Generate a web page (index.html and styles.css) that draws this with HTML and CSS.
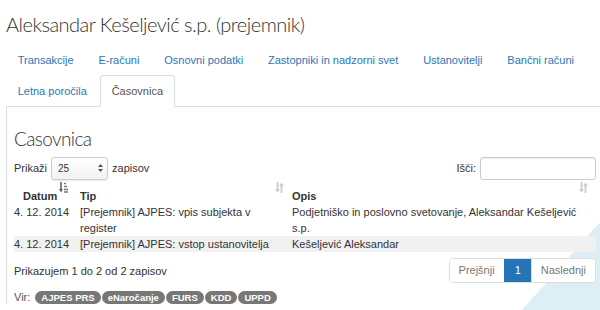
FILE: index.html
```html
<!DOCTYPE html>
<html lang="sl">
<head>
    <meta charset="UTF-8">
    <meta name="viewport" content="width=device-width, initial-scale=1.0">
    <title>Aleksandar Kešeljević s.p. (prejemnik)</title>
    <link rel="stylesheet" href="styles.css">
</head>
<body>
    <div class="page">
        <h1 class="title">Aleksandar Kešeljević s.p. (prejemnik)</h1>
        <ul class="tabs">
            <li><a href="#">Transakcije</a></li>
            <li><a href="#">E-računi</a></li>
            <li><a href="#">Osnovni podatki</a></li>
            <li><a href="#">Zastopniki in nadzorni svet</a></li>
            <li><a href="#">Ustanovitelji</a></li>
            <li><a href="#">Bančni računi</a></li>
            <li><a href="#">Letna poročila</a></li>
            <li class="active"><a href="#">Časovnica</a></li>
        </ul>
        <div class="tab-pane">
            <h2>Casovnica</h2>
            <div class="dt-top">
                <label class="length">Prikaži
                    <span class="select">
                        <span>25</span>
                        <svg width="5" height="8" viewBox="0 0 5 8"><path d="M0 3 L2.5 0 L5 3 Z M0 5 L2.5 8 L5 5 Z" fill="#555"/></svg>
                    </span>
                    zapisov</label>
                <label class="filter">Išči: <input type="search"></label>
            </div>
            <table class="timeline">
                <colgroup>
                    <col class="c-date">
                    <col class="c-type">
                    <col>
                </colgroup>
                <thead>
                    <tr>
                        <th class="th-date"><div class="th-in"><span>Datum</span>
                            <svg class="sort" width="9" height="11" viewBox="0 0 9 11"><path d="M2 0 V8" stroke="#666" stroke-width="1.6"/><path d="M0 7 H4 L2 10.5 Z" fill="#666"/><path d="M5 1.5 H7 M5 4.5 H8 M5 7.5 H9 M5 10 H9" stroke="#777" stroke-width="1.3"/></svg></div></th>
                        <th><div class="th-in"><span>Tip</span>
                            <svg class="sort" width="9" height="11" viewBox="0 0 9 11"><path d="M2.5 0 V8" stroke="#ccc" stroke-width="1.8"/><path d="M0 7 H5 L2.5 10.5 Z" fill="#ccc"/><path d="M6.5 3 V11" stroke="#ccc" stroke-width="1.8"/><path d="M4 4 H9 L6.5 0.5 Z" fill="#ccc"/></svg></div></th>
                        <th><div class="th-in"><span>Opis</span>
                            <svg class="sort" width="9" height="11" viewBox="0 0 9 11"><path d="M2.5 0 V8" stroke="#ccc" stroke-width="1.8"/><path d="M0 7 H5 L2.5 10.5 Z" fill="#ccc"/><path d="M6.5 3 V11" stroke="#ccc" stroke-width="1.8"/><path d="M4 4 H9 L6.5 0.5 Z" fill="#ccc"/></svg></div></th>
                    </tr>
                </thead>
                <tbody>
                    <tr>
                        <td>4. 12. 2014</td>
                        <td>[Prejemnik] AJPES: vpis subjekta v register</td>
                        <td>Podjetniško in poslovno svetovanje, Aleksandar Kešeljević s.p.</td>
                    </tr>
                    <tr class="even">
                        <td>4. 12. 2014</td>
                        <td>[Prejemnik] AJPES: vstop ustanovitelja</td>
                        <td>Kešeljević Aleksandar</td>
                    </tr>
                </tbody>
            </table>
            <div class="dt-bottom">
                <div class="info">Prikazujem 1 do 2 od 2 zapisov</div>
                <div class="pager">
                    <span class="page-item">Prejšnji</span>
                    <span class="page-item current">1</span>
                    <span class="page-item">Naslednji</span>
                </div>
            </div>
            <div class="sources">Vir:
                <span class="badge">AJPES PRS</span><span class="badge">eNaročanje</span><span class="badge">FURS</span><span class="badge">KDD</span><span class="badge">UPPD</span>
            </div>
        </div>
    </div>
</body>
</html>
```
FILE: styles.css
```css
* {
    box-sizing: border-box;
}
html {
    height: 100%;
    background: #fff linear-gradient(to bottom right, transparent 50%, #ddeef4 50%) right bottom / 78px 88px no-repeat;
}
body {
    margin: 0;
    overflow: hidden;
    font-family: "Liberation Sans", Arial, sans-serif;
    font-size: 11px;
    color: #333;
}
.page {
    width: 604px;
    padding-left: 6px;
}
.title {
    margin: 0;
    padding-top: 11px;
    font-family: Lato, "Open Sans", sans-serif;
    font-weight: 300;
    font-size: 20px;
    letter-spacing: -0.5px;
    line-height: 26px;
    color: #333;
}
.tabs {
    list-style: none;
    margin: 7px 0 0;
    padding: 0;
    display: flex;
    flex-wrap: wrap;
    border-bottom: 1px solid #ddd;
}
.tabs li {
    margin: 0 1.5px -1px 0;
}
.tabs a {
    display: block;
    padding: 7.5px 10.7px;
    font-size: 11px;
    line-height: 15px;
    color: #2a77b7;
    text-decoration: none;
    border: 1px solid transparent;
    border-radius: 3px 3px 0 0;
}
.tabs .active a {
    color: #555;
    background: #fff;
    border-color: #ddd #ddd transparent;
}
.tab-pane {
    border-left: 1px solid #ddd;
    padding: 0 8px 0 7px;
}
.tab-pane h2 {
    margin: 0;
    padding-top: 19px;
    font-family: Lato, "Open Sans", sans-serif;
    font-weight: 300;
    font-size: 19px;
    letter-spacing: -0.6px;
    line-height: 26px;
}
.dt-top {
    display: flex;
    justify-content: space-between;
    align-items: center;
    margin-top: 4px;
}
.dt-top label {
    display: flex;
    align-items: center;
    gap: 4px;
}
.select {
    display: inline-flex;
    align-items: center;
    justify-content: space-between;
    width: 57px;
    height: 23px;
    padding: 0 4px 0 6px;
    font-size: 10px;
    border: 1px solid #ccc;
    border-radius: 3px;
    background: linear-gradient(#fff, #f2f2f2);
    box-shadow: 0 1px 1px rgba(0, 0, 0, 0.08);
}
.filter input {
    width: 116px;
    height: 23px;
    margin: 1px 0 0 0;
    border: 1px solid #ccc;
    border-radius: 3px;
    box-shadow: inset 0 1px 1px rgba(0, 0, 0, 0.075);
}
.timeline {
    width: 100%;
    table-layout: fixed;
    border-collapse: collapse;
    margin-top: 1px;
}
.c-date {
    width: 66px;
}
.c-type {
    width: 212px;
}
.timeline th {
    padding: 0;
    text-align: left;
    font-weight: bold;
}
.th-in {
    display: flex;
    justify-content: space-between;
    align-items: flex-start;
    height: 23px;
    padding: 1px 8px 0 0;
}
.th-in span {
    align-self: flex-end;
    line-height: 16px;
}
.th-date .th-in {
    padding-left: 9px;
    padding-right: 12px;
}
.timeline td {
    padding: 0 10px 0 0;
    line-height: 16px;
    vertical-align: top;
}
.timeline tr.even td {
    background: #f1f1f1;
}
.dt-bottom {
    display: flex;
    justify-content: space-between;
    align-items: center;
    margin-top: 6px;
}
.pager {
    display: flex;
    border: 1px solid #ddd;
    border-radius: 4px;
    overflow: hidden;
}
.page-item {
    padding: 0 9px;
    line-height: 23px;
    color: #777;
    background: #fff;
}
.page-item + .page-item {
    border-left: 1px solid #ddd;
}
.page-item.current {
    padding: 0 10px;
    color: #fff;
    background: #2474b8;
    border-color: #2474b8;
}
.sources {
    margin-top: 8px;
    color: #555;
}
.badge {
    display: inline-block;
    padding: 0 6px;
    margin-left: 1px;
    font-size: 9.5px;
    font-weight: bold;
    line-height: 13px;
    color: #fff;
    background: #777;
    border-radius: 7px;
}
.badge:first-child {
    margin-left: 2px;
}
```
